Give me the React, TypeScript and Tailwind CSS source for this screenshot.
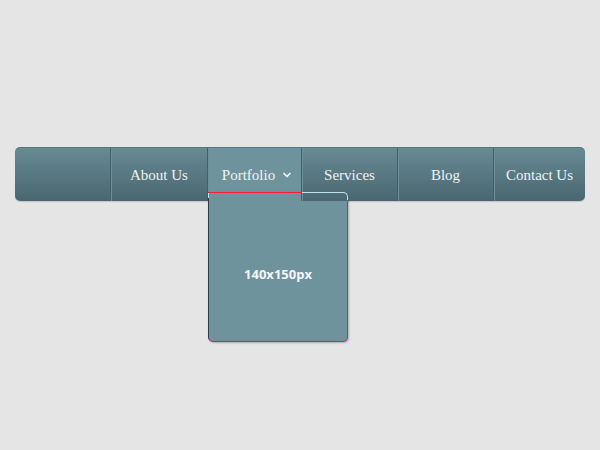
import { ChevronDown } from 'lucide-react'

const ITEMS = [
  { label: 'About Us', width: 'w-[97px]' },
  { label: 'Portfolio', width: 'w-[94px]', active: true },
  { label: 'Services', width: 'w-[96px]' },
  { label: 'Blog', width: 'w-[96px]' },
  { label: 'Contact Us', width: 'w-[92px]' },
]

function Dropdown() {
  return (
    <>
      {/* submenu panel, tucked under the next item */}
      <div className="absolute left-0 top-[44px] z-0 flex h-[150px] w-[140px] items-center justify-center rounded-b-[5px] rounded-tr-[5px] border-t border-r border-b border-l border-t-[#ff1a2e] border-r-[#ff1a2e] border-b-[#ff1a2e] border-l-[#2c3c42] bg-[#6f939d] pt-[16px] shadow-[1px_1px_2px_rgba(0,0,0,0.25)]">
        <span className="font-['Open_Sans',sans-serif] text-[13px] font-bold text-[#f4f7f8]">140x150px</span>
      </div>
      {/* highlight edge drawn over the neighbour */}
      <div className="absolute left-[94px] top-[44px] z-20 h-[8px] w-[46px] rounded-tr-[5px] border-t border-r border-[#b8e6ef]" />
      <div className="absolute left-0 top-[45px] z-20 h-[5px] w-px bg-[#b8e6ef]" />
    </>
  )
}

export default function App() {
  return (
    <div className="min-h-[450px] w-full bg-[#e5e5e5] px-[15px] pt-[147px]">
      <nav className="flex h-[54px] w-[570px] rounded-[5px] border-t border-[#557782] bg-gradient-to-b from-[#678a93] to-[#4a6771] font-['Liberation_Serif',serif] text-[15px] text-[#eef3f4] shadow-[0_1px_1px_rgba(0,0,0,0.15)]">
        <div className="w-[95px]" />
        {ITEMS.map((item) => (
          <div
            key={item.label}
            className={`${item.width} flex items-center justify-center border-l border-[#41606a] shadow-[inset_1px_0_0_#6c8f99] ${
              item.active ? 'relative gap-[6px] bg-[#6f939d] pl-[6px]' : item.label === 'Services' ? 'relative z-10 bg-gradient-to-b from-[#678a93] to-[#4a6771]' : ''
            } ${item.label === 'Contact Us' ? 'rounded-r-[5px]' : ''}`}
          >
            <span className="mt-[1px]">{item.label}</span>
            {item.active && <ChevronDown className="h-[12px] w-[12px]" strokeWidth={3.5} />}
            {item.active && <Dropdown />}
          </div>
        ))}
      </nav>
    </div>
  )
}
